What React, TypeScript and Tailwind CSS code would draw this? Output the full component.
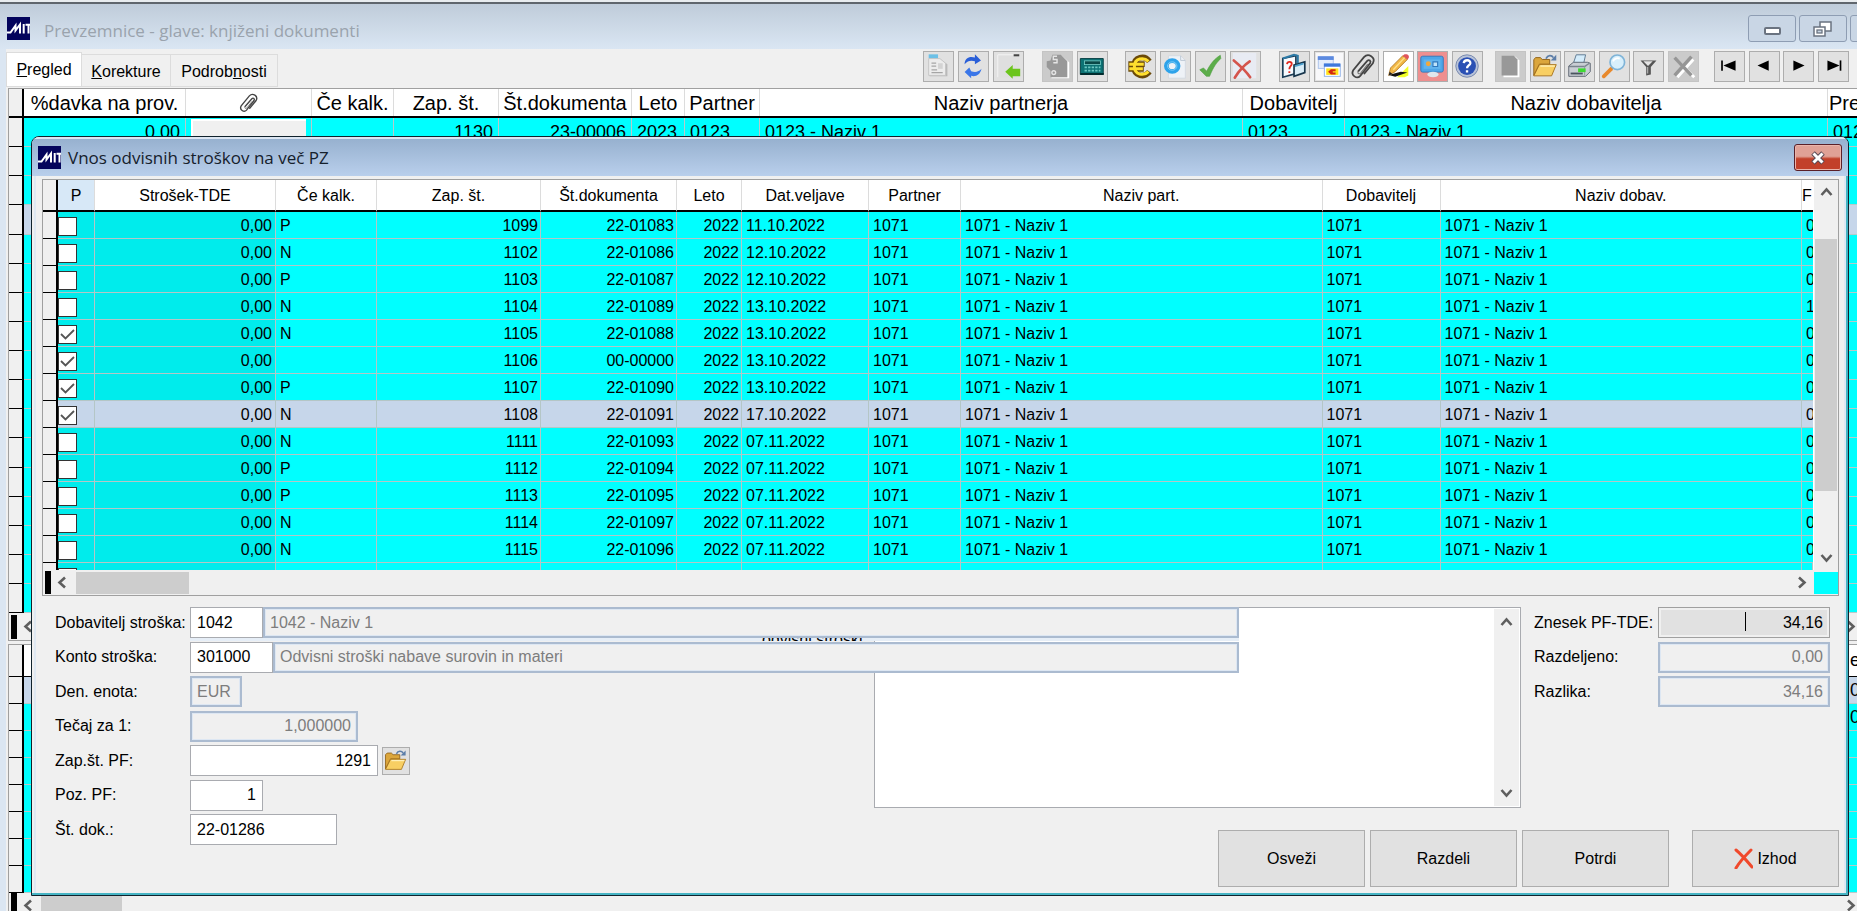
import React from "react";
import type { ReactNode } from "react";

/* ---------- icons ---------- */

function Svg({ children, className = "size-[29px]" }: { children: ReactNode; className?: string }) {
  return (
    <svg viewBox="0 0 31 31" className={className} fill="none" aria-hidden="true">
      {children}
    </svg>
  );
}

function MitLogo() {
  return (
    <svg viewBox="0 0 23 23" className="h-[23px] w-[23px] shrink-0" aria-hidden="true">
      <rect width="23" height="23" fill="#04045c" />
      <path d="M0 15.500H3.500L8.500 8.500V13.500L13 7.500V16.500" stroke="#fff" strokeWidth="2" fill="none" />
      <path d="M16.700 7V16.500M18.500 7.700H23M21.500 7.500V16.500" stroke="#fff" strokeWidth="2" />
    </svg>
  );
}

const FolderIcon = ({ className }: { className?: string }) => (
  <Svg className={className}>
    <path d="M3 8 5 6H10L12 8H20V13H9L3 25Z" fill="#dba63c" stroke="#8e6018" />
    <path d="M3 25.500 9 13.500H27L22 25.500Z" fill="#f8cf63" stroke="#a8741c" />
    <path d="M10 15H25.500" stroke="#fff0b8" strokeWidth="1.500" />
    <path d="M16 7C18 3 22 3 24 6" stroke="#5d7ea8" strokeWidth="1.800" />
    <path d="M27 3V9H21Z" fill="#5d7ea8" />
  </Svg>
);

const ClipIcon = ({ className }: { className?: string }) => (
  <Svg className={className}>
    <path
      d="M10 20.500 19.500 9.500C21.500 7.500 24 9.500 22.500 12L12 25.500C8.500 29.500 1.500 25 4.500 19.500L16 5.500C20.500 .5 29 5.500 25.500 12L16.500 23"
      stroke="#444"
      strokeWidth="1.900"
      strokeLinecap="round"
    />
    <path d="M10 20.500C8.500 23 11 24 12.500 22.500L20 13" stroke="#777" strokeWidth="1.200" />
  </Svg>
);

const DocIcon = () => (
  <Svg>
    <path d="M6 8H18L25 13V26H6Z" fill="#b9b9b9" />
    <path d="M5 7H17L23 12V25H5Z" fill="#ececec" stroke="#c4c4c4" />
    <rect x="5" y="2.500" width="10" height="4" fill="#6cc0e6" />
    <path d="M8 12H13M8 15H13M8 19H14M8 22H20" stroke="#a5a5a5" strokeWidth="1.300" />
    <rect x="15" y="12" width="5" height="6" fill="#d3d3d3" />
  </Svg>
);
const RefreshIcon = () => (
  <Svg>
    <path d="M6 13C6 6 12 4 17 6V2.500L23.500 9 17 13V10C13 8.500 9 9.500 6 13Z" fill="#2a5fd8" />
    <path d="M24 18C23 24 18 27 13 25.500V28L6 21.500 11 16.500 13 20.500C17 22 21 21.500 24 18Z" fill="#3a76e8" />
  </Svg>
);
const ImportIcon = () => (
  <Svg>
    <rect x="3.500" y="3" width="23" height="24" fill="#dfdfdf" />
    <path d="M4 27V3H26" stroke="#f4f4f4" />
    <path d="M21 3.500H27" stroke="#444" strokeWidth="2.200" />
    <path d="M12 21 20 14V18H28V26H20V28.500Z" fill="#6cc51c" />
  </Svg>
);
const ArchiveIcon = () => (
  <Svg>
    <path d="M11 4H20L28 11V28H9Z" fill="#fff" />
    <path d="M10 3H19L26 10V27H8V20L4 16V10L8 9Z" fill="#989898" />
    <path d="M15 4.500H11V8H15V11.500H11" stroke="#e5e5e5" strokeWidth="1.500" />
    <circle cx="11.500" cy="22" r="2" stroke="#e5e5e5" strokeWidth="1.500" />
  </Svg>
);
const CalcIcon = () => (
  <Svg>
    <path d="M2.500 7H27V24H2.500Z" fill="#0d7274" stroke="#043c40" />
    <path d="M2.500 24.500H27.500V22.500H2.500Z" fill="#022a2c" />
    <rect x="7" y="9.500" width="17" height="4" fill="#0a4848" stroke="#7fd6d0" strokeWidth=".8" />
    <path d="M7 16.500H24M7 20H24" stroke="#6cc7c2" strokeWidth="1.800" strokeDasharray="2.500 1.300" />
  </Svg>
);
const EuroIcon = () => (
  <Svg>
    <path d="M25 10C20 3 8.500 5 8.500 15.500S20 28 25 21M2.500 13H20M2.500 18H19" stroke="#6b4a08" strokeWidth="6" />
    <path d="M24 10C19 5 9 6.500 9 15.500S19 26 24 21M3.500 13H19M3.500 18H18" stroke="#ffdf2e" strokeWidth="3.200" />
  </Svg>
);
const GearIcon = () => (
  <Svg>
    <path d="M8 4H21L26 9V28H8Z" fill="#eef2f7" stroke="#d4dae1" />
    <path d="M21 4V9H26" stroke="#b9c5d2" />
    <ellipse cx="12" cy="15" rx="6.300" ry="5.800" stroke="#2ea3ea" strokeWidth="5" />
    <ellipse cx="12" cy="15" rx="5" ry="4.500" stroke="#7fcdf7" strokeWidth="1" />
  </Svg>
);
const CheckIcon = () => (
  <Svg>
    <path d="M4 19 8 17 11.500 20.500C15 13 20 7 26 3.500L26.500 7C20 13 17 20 14.500 26H11Z" fill="#5cad4a" stroke="#4a9a3c" strokeWidth=".6" />
  </Svg>
);
const CancelIcon = () => (
  <Svg>
    <rect x="2" y="1" width="25" height="27" fill="#e8ebf3" />
    <path d="M3 9C9 14 16 20 20.500 27M20 10C14 14 8 21 4 27.500" stroke="#d4544c" strokeWidth="2.800" strokeLinecap="round" />
  </Svg>
);
const HelpBookIcon = () => (
  <Svg>
    <path d="M3 7 17 4V23L3 27Z" fill="#f7fbff" stroke="#1b3d57" strokeWidth="1.800" />
    <path d="M3 7 15 3 19 4V12" stroke="#2d7aa6" strokeWidth="2.200" />
    <path d="M7.500 13C8 9.500 13 10 12.500 13C12 15.500 10 15 10 18.500M10 20.500V22.500" stroke="#e02a20" strokeWidth="2" />
    <path d="M15 14 26.500 10.500V22L15 26Z" fill="#d9ecf7" stroke="#17354c" strokeWidth="1.800" />
    <path d="M16 15 25 12.500" stroke="#4aa0cf" strokeWidth="2" />
  </Svg>
);
const WindowsIcon = () => (
  <Svg>
    <rect x="1" y="1" width="29" height="29" fill="#f8f8fa" />
    <rect x="3.500" y="5.500" width="16" height="12" fill="#e4edfb" stroke="#a9c1ea" />
    <path d="M3 6.500H20" stroke="#5c8ae0" strokeWidth="4" />
    <rect x="10" y="13" width="17" height="13" fill="#fff" stroke="#8fb0e6" />
    <path d="M9.500 14H27" stroke="#3f79dc" strokeWidth="3.500" />
    <rect x="12" y="17.500" width="13" height="7" fill="#ffe21c" />
    <path d="M14 21 17 18.500H22V20.500H19V22H22V24H17Z" fill="#d3260e" />
  </Svg>
);
const PencilIcon = () => (
  <Svg>
    <rect width="31" height="31" fill="#fff" />
    <path d="M14 27 26 15V25L22 27Z" fill="#f2ff2a" />
    <path d="M5 24.500 18 21 25 22 12 26.500Z" fill="#111" />
    <path d="M5 25 7 17 20 4 25 8 12 21Z" fill="#f2b746" stroke="#a46c18" strokeWidth=".8" />
    <path d="M20 4 22 2.500C25 1.500 28 4 26 7L25 8Z" fill="#e0555c" />
    <path d="M10 19 22 6" stroke="#ffe08a" strokeWidth="1.500" />
    <path d="M5 25 6 21 9 23.500Z" fill="#222" />
  </Svg>
);
const MonitorIcon = () => (
  <Svg>
    <rect width="31" height="31" fill="#ee8f8f" />
    <rect x="3" y="4.500" width="24" height="17" rx="2" fill="#4ea6e8" stroke="#2f78bd" />
    <rect x="6" y="8" width="18" height="10" fill="#62b4ee" />
    <circle cx="11" cy="12.500" r="2.600" fill="#f3a83b" />
    <path d="M16 10.500H21V15.500H16Z" stroke="#2f78bd" strokeWidth="1.200" fill="#bfe3fa" />
    <ellipse cx="16" cy="24" rx="6" ry="3" fill="#dfe6ec" />
  </Svg>
);
const HelpIcon = () => (
  <Svg>
    <circle cx="15" cy="15" r="12" fill="#b9c3d8" stroke="#7486ac" />
    <circle cx="15" cy="15" r="9.500" fill="#2a50b4" />
    <path d="M11.500 12C12 7.500 19 8 18.500 12C18 14.500 15 14.500 15 17.500M15 19.500V22" stroke="#fff" strokeWidth="2.500" />
  </Svg>
);
const BlankPageIcon = () => (
  <Svg>
    <path d="M8 5H21L25 9V27H8Z" fill="#fff" />
    <path d="M6 4H19L23 8V25H6Z" fill="#989898" />
  </Svg>
);
const PrinterIcon = () => (
  <Svg>
    <path d="M9 12 12 3H22L20 12Z" fill="#d4ecfb" stroke="#5c7890" />
    <path d="M4 15 9 11H24L27 12V21L22 26H4Z" fill="#c9ced4" stroke="#5b6570" />
    <path d="M4 15.500H21L26 12" stroke="#7b848e" strokeWidth="1.500" />
    <path d="M21 15V25" stroke="#8b949e" />
    <path d="M6 23H19" stroke="#4a545e" strokeWidth="2" />
    <rect x="14" y="17.500" width="8" height="4" fill="#3ddb32" />
  </Svg>
);
const SearchIcon = () => (
  <Svg>
    <path d="M4 26 12 18" stroke="#e8892c" strokeWidth="4" strokeLinecap="round" />
    <circle cx="18.500" cy="11" r="7.800" fill="#d7effc" stroke="#7fb4d8" strokeWidth="1.800" />
    <path d="M14 10C15 7 18 6 21 7" stroke="#fff" strokeWidth="2" />
  </Svg>
);
const FunnelIcon = () => (
  <Svg>
    <path d="M7 9H24L18 16V24L13 25V16Z" fill="#555" />
    <path d="M10 10H20L15 15Z" fill="#e4e4e4" />
    <path d="M14.500 16V23" stroke="#aaa" strokeWidth="1.500" />
  </Svg>
);
const DisabledXIcon = () => (
  <Svg>
    <path d="M9 9 27 27M26 8 9 27" stroke="#fff" strokeWidth="3" />
    <path d="M6 6 24 25M24 5 6 25" stroke="#969696" strokeWidth="3.600" />
  </Svg>
);
const FirstIcon = () => (
  <Svg>
    <path d="M7.500 9V20" stroke="#000" strokeWidth="1.800" />
    <path d="M9 14.500 22 9V20Z" fill="#000" />
  </Svg>
);
const PrevIcon = () => (
  <Svg>
    <path d="M8 14.500 20 9V20Z" fill="#000" />
  </Svg>
);
const NextIcon = () => (
  <Svg>
    <path d="M22 14.500 10 9V20Z" fill="#000" />
  </Svg>
);
const LastIcon = () => (
  <Svg>
    <path d="M22 14.500 9 9V20Z" fill="#000" />
    <path d="M23 9V20" stroke="#000" strokeWidth="1.800" />
  </Svg>
);

type Dir = "up" | "down" | "left" | "right";
const chevrons: Record<Dir, string> = {
  up: "M1.500 9 6.500 3.500 11.500 9",
  down: "M1.500 4 6.500 9.500 11.500 4",
  left: "M9 1.500 3.500 6.500 9 11.500",
  right: "M4 1.500 9.500 6.500 4 11.500",
};
function Chevron({ dir }: { dir: Dir }) {
  return (
    <svg viewBox="0 0 13 13" className="size-[13px] shrink-0" fill="none" aria-hidden="true">
      <path d={chevrons[dir]} stroke="#5e5e5e" strokeWidth="2.600" />
    </svg>
  );
}

/* ---------- toolbar ---------- */

type Tool = { name: string; icon: ReactNode; off?: boolean };
const groups: { box: string; tools: Tool[] }[] = [
  {
    box: "w-[101px] mr-[18px]",
    tools: [
      { name: "Dokument", icon: <DocIcon /> },
      { name: "Osveži podatke", icon: <RefreshIcon /> },
      { name: "Uvoz", icon: <ImportIcon /> },
    ],
  },
  {
    box: "w-[66px] mr-[17px]",
    tools: [
      { name: "Arhiv", icon: <ArchiveIcon />, off: true },
      { name: "Kalkulator", icon: <CalcIcon /> },
    ],
  },
  {
    box: "w-[136px] mr-[18px]",
    tools: [
      { name: "Valuta", icon: <EuroIcon /> },
      { name: "Nastavitve", icon: <GearIcon /> },
      { name: "Shrani", icon: <CheckIcon /> },
      { name: "Prekliči", icon: <CancelIcon /> },
    ],
  },
  {
    box: "w-[204px] mr-[12px]",
    tools: [
      { name: "Navodila", icon: <HelpBookIcon /> },
      { name: "Okna", icon: <WindowsIcon /> },
      { name: "Priponke", icon: <ClipIcon /> },
      { name: "Uredi", icon: <PencilIcon /> },
      { name: "Zaslon", icon: <MonitorIcon /> },
      { name: "Pomoč", icon: <HelpIcon /> },
    ],
  },
  {
    box: "w-[204px] mr-[15px]",
    tools: [
      { name: "Nov", icon: <BlankPageIcon />, off: true },
      { name: "Odpri", icon: <FolderIcon /> },
      { name: "Natisni", icon: <PrinterIcon /> },
      { name: "Išči", icon: <SearchIcon /> },
      { name: "Filter", icon: <FunnelIcon /> },
      { name: "Briši", icon: <DisabledXIcon />, off: true },
    ],
  },
  {
    box: "w-[135px]",
    tools: [
      { name: "Prvi", icon: <FirstIcon /> },
      { name: "Prejšnji", icon: <PrevIcon /> },
      { name: "Naslednji", icon: <NextIcon /> },
      { name: "Zadnji", icon: <LastIcon /> },
    ],
  },
];

function Toolbar() {
  return (
    <div className="ml-auto flex pr-[8px] pt-[2px]">
      {groups.map((g) => (
        <div key={g.box + g.tools[0].name} className={`flex justify-between ${g.box}`}>
          {g.tools.map((t) => (
            <button
              key={t.name}
              type="button"
              aria-label={t.name}
              disabled={t.off}
              className="flex size-[31px] shrink-0 items-center justify-center border border-[#adadad] bg-[#e1e1e1] disabled:border-[#c4c4c4] disabled:bg-[#cbcbcb]"
            >
              {t.icon}
            </button>
          ))}
        </div>
      ))}
    </div>
  );
}

/* ---------- main window ---------- */

const mainCols = [
  { w: "w-[162px]", head: "%davka na prov.", value: "0,00", right: true },
  { w: "w-[126px]", head: "clip", value: "", right: false },
  { w: "w-[82px]", head: "Če kalk.", value: "", right: false },
  { w: "w-[105px]", head: "Zap. št.", value: "1130", right: true },
  { w: "w-[133px]", head: "Št.dokumenta", value: "23-00006", right: true },
  { w: "w-[53px]", head: "Leto", value: "2023", right: false },
  { w: "w-[75px]", head: "Partner", value: "0123", right: false },
  { w: "flex-1", head: "Naziv partnerja", value: "0123 - Naziv 1", right: false },
  { w: "w-[102px]", head: "Dobavitelj", value: "0123", right: false },
  { w: "flex-1", head: "Naziv dobavitelja", value: "0123 - Naziv 1", right: false },
  { w: "w-[29px]", head: "Pre", value: "0123", right: false },
];

function MainGrid() {
  return (
    <div className="flex h-[553px] shrink-0 flex-col border-b border-l border-t border-[#a0a0a0] bg-[#f0f0f0]">
      <div className="flex h-[29px] shrink-0 border-b-2 border-black bg-white text-[20px] leading-[28px]">
        <div className="w-[15px] shrink-0 border-r-2 border-black bg-[#f0f0f0]" />
        {mainCols.map((c) => (
          <div
            key={c.head}
            className={`flex min-w-0 shrink-0 items-center justify-center overflow-hidden whitespace-nowrap border-r border-[#dcdcdc] last:justify-start last:border-r-0 last:pl-px ${c.w}`}
          >
            {c.head === "clip" ? <ClipIcon className="size-[22px]" /> : c.head}
          </div>
        ))}
      </div>
      <div className="flex min-h-0 flex-1 flex-col overflow-hidden">
        <div className="flex h-[495px] shrink-0 flex-col">
          {Array.from({ length: 17 }, (_, r) => (
            <div
              key={r}
              className={`flex min-h-0 flex-1 text-[18px] ${r === 3 ? "bg-[#c6d6ea]" : "bg-[#00ffff]"}`}
            >
              <div className="w-[15px] shrink-0 border-b border-r-2 border-black bg-[#f0f0f0]" />
              {mainCols.map((c, i) => (
                <div
                  key={c.head}
                  className={`flex min-w-0 shrink-0 items-center overflow-hidden whitespace-nowrap border-b border-r border-[#b9c9c9] px-[5px] last:border-r-0 ${c.w} ${c.right ? "justify-end" : ""}`}
                >
                  {i === 1 && r === 0 ? (
                    <span className="h-[26px] w-full border-l-2 border-t-2 border-white bg-[#f0f0f0]" />
                  ) : r === 0 ? (
                    c.value
                  ) : null}
                </div>
              ))}
            </div>
          ))}
        </div>
      </div>
      <div className="flex h-[27px] shrink-0 items-center bg-[#f0f0f0]">
        <span className="ml-[2px] h-[24px] w-[6px] bg-black" />
        <span className="ml-[5px]">
          <Chevron dir="left" />
        </span>
        <span className="ml-auto">
          <Chevron dir="right" />
        </span>
      </div>
    </div>
  );
}

function DetailGrid() {
  const marks = ["0", "0", "", "", "", "", "", ""];
  return (
    <div className="mt-[3px] flex min-h-0 flex-1 flex-col overflow-hidden border-l border-t border-[#a0a0a0]">
      <div className="flex h-[32px] shrink-0 items-center border-b border-black bg-white text-[18px]">
        <div className="h-full w-[15px] shrink-0 border-r-2 border-black bg-[#f0f0f0]" />
        <span className="ml-auto w-[7px]">e</span>
      </div>
      {marks.map((m, i) => (
        <div key={i} className={`flex h-[27px] shrink-0 text-[18px] ${i === 0 ? "bg-[#c6d6ea]" : "bg-[#00ffff]"}`}>
          <div className="w-[15px] shrink-0 border-b border-r-2 border-black bg-[#f0f0f0]" />
          <div className="flex flex-1 items-center border-b border-[#b9c9c9]">
            <span className="ml-auto w-[7px]">{m}</span>
          </div>
        </div>
      ))}
      <div className="flex h-[24px] shrink-0 items-start bg-[#f0f0f0]">
        <span className="ml-[2px] h-full w-[6px] bg-black" />
        <span className="ml-[5px] mt-[6px]">
          <Chevron dir="left" />
        </span>
        <span className="ml-[6px] h-full w-[81px] bg-[#cdcdcd]" />
        <span className="ml-auto mt-[6px]">
          <Chevron dir="right" />
        </span>
      </div>
    </div>
  );
}

function MainWindow() {
  const caption = "flex h-[27px] w-[48px] shrink-0 items-center justify-center rounded-[3px] border border-[#8e9db3] bg-[#c9d6e5]";
  return (
    <div className="flex h-screen flex-col overflow-hidden border-t-2 border-[#e8ecef] bg-[#dbe6f2]">
      <header className="flex h-[47px] shrink-0 items-center overflow-hidden border-t-2 border-[#5f666d] bg-linear-to-b from-[#bfccda] to-[#dae6f3] pl-[7px] pt-[4px]">
        <MitLogo />
        <h1 className="ml-[14px] pt-[5px] font-['Open_Sans',sans-serif] text-[17px] text-[#9aa3ad]">
          Prevzemnice - glave: knjiženi dokumenti
        </h1>
        <div className="-mr-[41px] ml-auto flex gap-[3px]">
          <button type="button" aria-label="Pomanjšaj" className={caption}>
            <span className="mt-[4px] h-[8px] w-[17px] rounded-[2px] border-2 border-[#6a7380] bg-white" />
          </button>
          <button type="button" aria-label="Obnovi" className={caption}>
            <svg viewBox="0 0 20 16" className="h-[16px] w-[20px]" aria-hidden="true">
              <rect x="7" y="1" width="11" height="9" fill="#fff" stroke="#6a7380" strokeWidth="1.500" />
              <rect x="1" y="6" width="11" height="9" fill="#fff" stroke="#6a7380" strokeWidth="1.500" />
              <rect x="4" y="9" width="5" height="3" fill="#c9d6e5" stroke="#6a7380" strokeWidth="1.300" />
            </svg>
          </button>
          <button type="button" aria-label="Zapri glavno okno" className={caption} />
        </div>
      </header>
      <div className="ml-[6px] flex min-h-0 flex-1 flex-col bg-[#f0f0f0]">
        <div className="flex h-[39px] shrink-0 items-start">
          <nav className="flex h-[38px] items-end pt-[3px] text-[16px]" aria-label="Pogledi">
            <a href="#pregled" className="flex h-full w-[76px] items-center justify-center border border-[#dcdcdc] bg-white">
              <span>
                <u>P</u>regled
              </span>
            </a>
            <a href="#korekture" className="flex h-[33px] w-[89px] items-center justify-center border border-l-0 border-[#dcdcdc]">
              <span className="pt-[3px]">
                <u>K</u>orekture
              </span>
            </a>
            <a href="#podrobnosti" className="flex h-[33px] w-[107px] items-center justify-center border border-l-0 border-[#dcdcdc]">
              <span className="pt-[3px]">
                Podrob<u>n</u>osti
              </span>
            </a>
          </nav>
          <Toolbar />
        </div>
        <div className="flex min-h-0 flex-1 flex-col pl-[2px]">
          <MainGrid />
          <DetailGrid />
        </div>
      </div>
    </div>
  );
}

/* ---------- dialog ---------- */

type Row = { on: boolean; kalk: string; zap: string; dok: string; date: string };
const rows: Row[] = [
  { on: false, kalk: "P", zap: "1099", dok: "22-01083", date: "11.10.2022" },
  { on: false, kalk: "N", zap: "1102", dok: "22-01086", date: "12.10.2022" },
  { on: false, kalk: "P", zap: "1103", dok: "22-01087", date: "12.10.2022" },
  { on: false, kalk: "N", zap: "1104", dok: "22-01089", date: "13.10.2022" },
  { on: true, kalk: "N", zap: "1105", dok: "22-01088", date: "13.10.2022" },
  { on: true, kalk: "", zap: "1106", dok: "00-00000", date: "13.10.2022" },
  { on: true, kalk: "P", zap: "1107", dok: "22-01090", date: "13.10.2022" },
  { on: true, kalk: "N", zap: "1108", dok: "22-01091", date: "17.10.2022" },
  { on: false, kalk: "N", zap: "1111", dok: "22-01093", date: "07.11.2022" },
  { on: false, kalk: "P", zap: "1112", dok: "22-01094", date: "07.11.2022" },
  { on: false, kalk: "P", zap: "1113", dok: "22-01095", date: "07.11.2022" },
  { on: false, kalk: "N", zap: "1114", dok: "22-01097", date: "07.11.2022" },
  { on: false, kalk: "N", zap: "1115", dok: "22-01096", date: "07.11.2022" },
];
const SELECTED = 7;

const cell = "h-[27px] overflow-hidden whitespace-nowrap border-b border-r border-[#b4c6c6] p-0 pt-[2px]";
const headCell =
  "h-[32px] overflow-hidden whitespace-nowrap border-b-2 border-r border-b-black border-r-[#dcdcdc] p-0 pt-[2px] font-normal";

function Tick({ name, on }: { name: string; on: boolean }) {
  return (
    <span className="relative block size-[19px]">
      <input
        type="checkbox"
        aria-label={name}
        defaultChecked={on}
        className="peer block size-[19px] appearance-none border border-[#333] bg-white"
      />
      <svg
        viewBox="0 0 19 19"
        className="pointer-events-none absolute inset-0 hidden size-[19px] peer-checked:block"
        fill="none"
        aria-hidden="true"
      >
        <path d="M3 9 7.500 13.500 16 5" stroke="#555" strokeWidth="1.800" />
      </svg>
    </span>
  );
}

function CostTable() {
  return (
    <div className="border border-[#a0a0a0] bg-white">
      <div className="flex">
        <div className="h-[390px] min-w-0 flex-1 overflow-hidden">
          <table className="w-full table-fixed border-separate border-spacing-0 text-[16px] leading-[20px]">
            <colgroup>
              <col className="w-[15px]" />
              <col className="w-[37px]" />
              <col className="w-[181px]" />
              <col className="w-[101px]" />
              <col className="w-[164px]" />
              <col className="w-[136px]" />
              <col className="w-[65px]" />
              <col className="w-[127px]" />
              <col className="w-[92px]" />
              <col />
              <col className="w-[118px]" />
              <col />
              <col className="w-[11px]" />
            </colgroup>
            <thead>
              <tr>
                <th className="h-[32px] border-b-2 border-r-2 border-black bg-[#f0f0f0] p-0" />
                <th className={`${headCell} bg-[#d7e8f7]`}>P</th>
                <th className={headCell}>Strošek-TDE</th>
                <th className={headCell}>Če kalk.</th>
                <th className={headCell}>Zap. št.</th>
                <th className={headCell}>Št.dokumenta</th>
                <th className={headCell}>Leto</th>
                <th className={headCell}>Dat.veljave</th>
                <th className={headCell}>Partner</th>
                <th className={headCell}>Naziv part.</th>
                <th className={headCell}>Dobavitelj</th>
                <th className={headCell}>Naziv dobav.</th>
                <th className={`${headCell} border-r-0 text-left`}>F</th>
              </tr>
            </thead>
            <tbody>
              {rows.map((r, i) => {
                const sel = i === SELECTED;
                const edit = sel ? "" : "bg-[#00ecec]";
                return (
                  <tr key={r.zap} className={sel ? "bg-[#c6d6ea]" : "bg-[#00ffff]"}>
                    <td className="h-[27px] border-b border-r-2 border-black bg-[#f0f0f0] p-0" />
                    <td className={`${cell} ${edit}`}>
                      <Tick name={`Izberi ${r.zap}`} on={r.on} />
                    </td>
                    <td className={`${cell} ${edit} pr-[3px] text-right`}>0,00</td>
                    <td className={`${cell} pl-[4px]`}>{r.kalk}</td>
                    <td className={`${cell} pr-[2px] text-right`}>{r.zap}</td>
                    <td className={`${cell} pr-[2px] text-right`}>{r.dok}</td>
                    <td className={`${cell} pr-[2px] text-right`}>2022</td>
                    <td className={`${cell} pl-[4px]`}>{r.date}</td>
                    <td className={`${cell} pl-[4px]`}>1071</td>
                    <td className={`${cell} pl-[4px]`}>1071 - Naziv 1</td>
                    <td className={`${cell} pl-[4px]`}>1071</td>
                    <td className={`${cell} pl-[4px]`}>1071 - Naziv 1</td>
                    <td className={`${cell} border-r-0 pl-[4px]`}>{i === 3 ? "1" : "0"}</td>
                  </tr>
                );
              })}
              <tr className="bg-[#00ffff]">
                <td className="h-[27px] border-r-2 border-black bg-[#f0f0f0] p-0" />
                <td className={`${cell} bg-[#00ecec]`}>
                  <Tick name="Izberi naslednjo" on={false} />
                </td>
                <td className={`${cell} bg-[#00ecec]`} />
                {Array.from({ length: 10 }, (_, i) => (
                  <td key={i} className={cell} />
                ))}
              </tr>
            </tbody>
          </table>
        </div>
        <div className="ml-px flex w-[24px] shrink-0 flex-col items-center bg-[#f0f0f0] py-[6px]">
          <Chevron dir="up" />
          <span className="mt-[40px] h-[252px] w-[22px] bg-[#cdcdcd]" />
          <span className="mt-auto">
            <Chevron dir="down" />
          </span>
        </div>
      </div>
      <div className="flex h-[25px] items-center bg-[#f0f0f0]">
        <span className="ml-[2px] h-[23px] w-[6px] bg-black" />
        <span className="ml-[5px]">
          <Chevron dir="left" />
        </span>
        <span className="ml-[7px] h-[22px] w-[113px] bg-[#cdcdcd]" />
        <span className="ml-auto">
          <Chevron dir="right" />
        </span>
        <span className="ml-[6px] h-[22px] w-[24px] bg-[#00ffff]" />
      </div>
    </div>
  );
}

const field = "h-[31px] shrink-0 border border-[#a9abb0] bg-white px-[6px] text-[16px] text-black outline-none";
const locked =
  "h-[31px] shrink-0 border-2 border-[#abbbd0] bg-[#f0f0f0] px-[5px] text-[16px] text-[#7d7d7d] shadow-[inset_0_0_0_1px_#dde7f3] outline-none";

function FieldRow({ id, label, children, wide }: { id: string; label: string; children: ReactNode; wide?: boolean }) {
  return (
    <div className={`flex items-center ${wide ? "relative z-10 -mr-[365px]" : ""}`}>
      <label htmlFor={id} className="w-[135px] shrink-0 whitespace-nowrap text-[16px]">
        {label}
      </label>
      {children}
    </div>
  );
}

function CostForm() {
  return (
    <div className="mt-[11px] flex">
      <div className="flex h-[238px] w-[819px] shrink-0 flex-col justify-between">
        <FieldRow id="dobavitelj" label="Dobavitelj stroška:" wide>
          <input id="dobavitelj" defaultValue="1042" className={`${field} w-[73px]`} />
          <input aria-label="Naziv dobavitelja" disabled defaultValue="1042 - Naziv 1" className={`${locked} min-w-0 flex-1`} />
          <span className="absolute left-[135px] right-0 top-full flex h-[3px] items-center overflow-hidden bg-[#e6eef7] pl-[572px] text-[16px]">
            odvisni stroški
          </span>
        </FieldRow>
        <FieldRow id="konto" label="Konto stroška:" wide>
          <input id="konto" defaultValue="301000" className={`${field} w-[83px]`} />
          <input
            aria-label="Naziv konta"
            disabled
            defaultValue="Odvisni stroški nabave surovin in materi"
            className={`${locked} min-w-0 flex-1`}
          />
        </FieldRow>
        <FieldRow id="enota" label="Den. enota:">
          <input id="enota" disabled defaultValue="EUR" className={`${locked} w-[52px]`} />
        </FieldRow>
        <FieldRow id="tecaj" label="Tečaj za 1:">
          <input id="tecaj" disabled defaultValue="1,000000" className={`${locked} w-[168px] text-right`} />
        </FieldRow>
        <FieldRow id="zappf" label="Zap.št. PF:">
          <input id="zappf" defaultValue="1291" className={`${field} w-[188px] text-right`} />
          <button
            type="button"
            aria-label="Izberi PF"
            className="ml-[4px] flex size-[28px] items-center justify-center border border-[#adadad] bg-[#e1e1e1]"
          >
            <FolderIcon className="size-[26px]" />
          </button>
        </FieldRow>
        <FieldRow id="pozpf" label="Poz. PF:">
          <input id="pozpf" defaultValue="1" className={`${field} w-[73px] text-right`} />
        </FieldRow>
        <FieldRow id="stdok" label="Št. dok.:">
          <input id="stdok" defaultValue="22-01286" className={`${field} w-[147px]`} />
        </FieldRow>
      </div>
      <div className="flex h-[201px] min-w-0 flex-1 border border-[#a9abb0] bg-white">
        <textarea aria-label="Opomba" className="min-w-0 flex-1 resize-none bg-white p-1 text-[16px] outline-none" />
        <div className="my-px mr-px flex w-[25px] shrink-0 flex-col items-center justify-between bg-[#f0f0f0] py-[7px]">
          <Chevron dir="up" />
          <Chevron dir="down" />
        </div>
      </div>
      <div className="ml-[13px] mr-[14px] flex h-[100px] w-[296px] shrink-0 flex-col justify-between">
        <div className="flex items-center">
          <label htmlFor="znesek" className="w-[124px] shrink-0 whitespace-nowrap text-[16px]">
            Znesek PF-TDE:
          </label>
          <div className="relative flex-1">
            <input
              id="znesek"
              defaultValue="34,16"
              className="block h-[31px] w-full border border-[#a0a0a0] bg-[#e1e1e1] px-[6px] text-right text-[16px] shadow-[inset_0_0_0_2px_#f0f0f0] outline-none"
            />
            <span className="absolute left-[87px] top-[5px] h-[19px] w-px bg-black" />
          </div>
        </div>
        <div className="flex items-center">
          <label htmlFor="razdeljeno" className="w-[124px] shrink-0 text-[16px]">
            Razdeljeno:
          </label>
          <input id="razdeljeno" disabled defaultValue="0,00" className={`${locked} w-[172px] text-right`} />
        </div>
        <div className="flex items-center">
          <label htmlFor="razlika" className="w-[124px] shrink-0 text-[16px]">
            Razlika:
          </label>
          <input id="razlika" disabled defaultValue="34,16" className={`${locked} w-[172px] text-right`} />
        </div>
      </div>
    </div>
  );
}

function CostDialog() {
  const action = "flex h-[57px] w-[147px] items-center justify-center border border-[#adadad] bg-[#e1e1e1] text-[16px]";
  return (
    <section
      role="dialog"
      aria-labelledby="dialog-title"
      className="absolute left-[31px] right-[8px] top-[136px] overflow-hidden rounded-t-[8px] border border-[#10222c] bg-[#f0f0f0] shadow-[inset_-2px_-2px_0_0_#46b4c4]"
    >
      <header className="flex h-[39px] items-center border-t-2 border-[#dce6f2] bg-linear-to-b from-[#97b1cf] to-[#b9cfec] pl-[6px] pr-[6px]">
        <MitLogo />
        <h2 id="dialog-title" className="ml-[7px] font-['Open_Sans',sans-serif] text-[17px] text-[#15202c]">
          Vnos odvisnih stroškov na več PZ
        </h2>
        <button
          type="button"
          aria-label="Zapri"
          className="ml-auto flex h-[27px] w-[48px] items-center justify-center rounded-[3px] border border-[#5a2028] bg-linear-to-b from-[#e0a196] from-45% to-[#c2402a] to-55% shadow-[inset_0_0_0_1px_#eab5ab]"
        >
          <svg viewBox="0 0 16 14" className="h-[14px] w-[16px]" aria-hidden="true">
            <path d="M3 2 13 12M13 2 3 12" stroke="#5b4a55" strokeWidth="5" />
            <path d="M3.500 2.500 12.500 11.500M12.500 2.500 3.500 11.500" stroke="#fff" strokeWidth="3" />
          </svg>
        </button>
      </header>
      <div className="mx-[2px] mb-[2px] border-x-2 border-[#dfe8f2] pb-[6px] pl-[6px] pt-[3px]">
        <div className="mr-[5px]">
          <CostTable />
        </div>
        <div className="pl-[13px]">
          <CostForm />
        </div>
        <div className="-mt-[15px] mr-[5px] flex justify-end gap-[5px]">
          <button type="button" className={action}>
            Osveži
          </button>
          <button type="button" className={action}>
            Razdeli
          </button>
          <button type="button" className={action}>
            Potrdi
          </button>
          <button type="button" className={`${action} ml-[18px] gap-[4px]`}>
            <svg viewBox="0 0 19 21" className="h-[21px] w-[19px]" fill="none" aria-hidden="true">
              <path d="M2 2C7 6 13 13 18 19M17 2C12 7 6 13 2 20" stroke="#f0492c" strokeWidth="3" strokeLinecap="round" />
            </svg>
            Izhod
          </button>
        </div>
      </div>
    </section>
  );
}

export default function App() {
  return (
    <main className="relative min-h-screen overflow-hidden font-['Liberation_Sans',Arial,sans-serif] text-black">
      <MainWindow />
      <CostDialog />
    </main>
  );
}
